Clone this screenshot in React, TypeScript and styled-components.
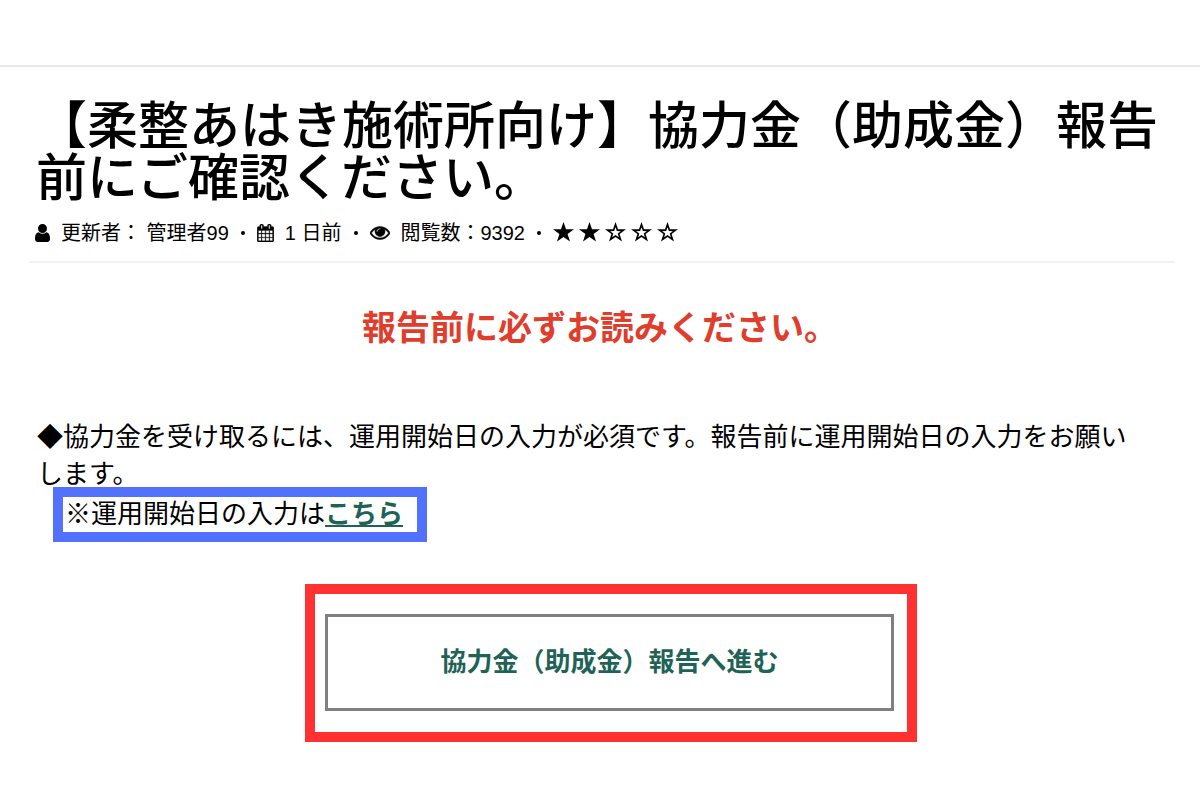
import React from "react";
import styled, { createGlobalStyle } from "styled-components";

const GlobalStyle = createGlobalStyle`
  * { box-sizing: border-box; }
  body {
    margin: 0;
    background: #fff;
    color: #000;
    font-family: "Liberation Sans", "Noto Sans CJK JP", sans-serif;
  }
`;

const TopBar = styled.header`
  height: 67px;
  border-bottom: 2px solid #e5eae8;
`;

const Article = styled.main`
  padding: 29px 25px 58px 29px;
`;

const Title = styled.h1`
  margin: 0;
  padding: 0 7px;
  font-size: 51px;
  line-height: 52px;
  font-weight: 500;
  font-family: "Noto Sans CJK JP", sans-serif;
`;

const Meta = styled.div`
  display: flex;
  flex-wrap: wrap;
  align-items: center;
  min-height: 63px;
  padding: 4px 6px 0;
  border-bottom: 2px solid #f2f2f2;
  font-size: 20px;
  line-height: 28px;
`;

const MetaItem = styled.span`
  display: flex;
  align-items: center;
  gap: 11px;
`;

const Dot = styled.span`
  width: 4px;
  height: 4px;
  margin: 0 12px;
  border-radius: 50%;
  background: #000;
`;

const Stars = styled.span`
  display: flex;
  gap: 5px;
`;

const Icon = styled.svg`
  display: block;
  fill: #000;
`;

const Notice = styled.h2`
  margin: 40px 0 0;
  padding-right: 4px;
  font-size: 34px;
  line-height: 50px;
  font-weight: 700;
  text-align: center;
  color: #e03e2d;
`;

const Body = styled.p`
  margin: 66px 0 0;
  padding: 0 32px 0 8px;
  font-size: 26px;
  line-height: 37px;
`;

const LinkBox = styled.p`
  width: fit-content;
  margin: -6px 0 0 24px;
  padding: 0 14px 0 2px;
  border: 10px solid #5271ff;
  font-size: 26px;
  line-height: 35px;
`;

const GuideLink = styled.a`
  color: #1f6357;
  font-weight: 700;
`;

const ActionArea = styled.div`
  display: flex;
  justify-content: center;
  padding: 42px 0 0 18px;
`;

const ActionFrame = styled.div`
  width: 612px;
  max-width: 100%;
  padding: 20px 13px 21px 10px;
  border: 10px solid #ff3131;
`;

const ActionButton = styled.button`
  display: block;
  width: 100%;
  min-height: 97px;
  padding: 0 0 6px;
  border: 3px solid #808080;
  background: #fff;
  color: #1f6357;
  font: inherit;
  font-size: 26px;
  font-weight: 700;
`;

const UserIcon = () => (
  <Icon width="15" height="18" viewBox="256 128 1280 1536" aria-hidden="true">
    <path d="M1536 1399q0 109-62.5 187t-150.5 78h-854q-88 0-150.5-78t-62.5-187q0-85 8.5-160.5t31.5-152 58.5-131 94-89 134.5-34.5q131 128 313 128t313-128q76 0 134.5 34.5t94 89 58.5 131 31.5 152 8.5 160.5zm-256-887q0 159-112.5 271.5t-271.5 112.5-271.5-112.5-112.5-271.5 112.5-271.5 271.5-112.5 271.5 112.5 112.5 271.5z" />
  </Icon>
);

const CalendarIcon = () => (
  <Icon width="17" height="18" viewBox="64 0 1664 1792" stroke="#000" strokeWidth="30" aria-hidden="true">
    <path d="M192 1664h288v-288h-288v288zm352 0h320v-288h-320v288zm-352-352h288v-320h-288v320zm352 0h320v-320h-320v320zm-352-384h288v-288h-288v288zm736 736h320v-288h-320v288zm-384-736h320v-288h-320v288zm768 736h288v-288h-288v288zm-384-352h320v-320h-320v320zm-352-864v-288q0-13-9.500-22.500t-22.500-9.500h-64q-13 0-22.500 9.500t-9.500 22.500v288q0 13 9.500 22.500t22.500 9.500h64q13 0 22.500-9.500t9.500-22.500zm736 864h288v-320h-288v320zm-384-384h320v-288h-320v288zm384 0h288v-288h-288v288zm32-480v-288q0-13-9.500-22.500t-22.500-9.500h-64q-13 0-22.500 9.500t-9.500 22.500v288q0 13 9.500 22.500t22.500 9.500h64q13 0 22.500-9.500t9.500-22.500zm384-64v1280q0 52-38 90t-90 38h-1408q-52 0-90-38t-38-90v-1280q0-52 38-90t90-38h128v-96q0-66 47-113t113-47h64q66 0 113 47t47 113v96h384v-96q0-66 47-113t113-47h64q66 0 113 47t47 113v96h128q52 0 90 38t38 90z" />
  </Icon>
);

const EyeIcon = () => (
  <Icon width="20" height="14" viewBox="0 352 1792 1216" stroke="#000" strokeWidth="50" aria-hidden="true">
    <path d="M1664 960q-152-236-381-353 61 104 61 225 0 185-131.5 316.5t-316.5 131.5-316.5-131.5-131.5-316.5q0-121 61-225-229 117-381 353 133 205 333.5 326.5t434.500 121.500 434.500-121.500 333.500-326.500zm-720-384q0-20-14-34t-34-14q-125 0-214.500 89.500t-89.500 214.500q0 20 14 34t34 14 34-14 14-34q0-86 61-147t147-61q20 0 34-14t14-34zm848 384q0 34-20 69-140 230-376.500 368.500t-499.500 138.500-499.500-139-376.500-368q-20-35-20-69t20-69q140-229 376.500-368t499.500-139 499.500 139 376.500 368q20 35 20 69z" />
  </Icon>
);

const STAR = "M10 0 12.4 6.900 20 7 13.900 11.400 16.200 18.500 10 14.200 3.800 18.500 6.100 11.400 0 7 7.600 6.900Z";
const STAR_HOLE = "M10 5 8.700 8.600 4.900 8.700 7.900 11 6.800 14.500 10 12.400 13.200 14.500 12.100 11 15.100 8.700 11.300 8.600Z";

const Star = ({ filled }: { filled: boolean }) => (
  <Icon width="21" height="21" viewBox="0 0 20 20" aria-hidden="true">
    <path fillRule="evenodd" d={filled ? STAR : STAR + STAR_HOLE} />
  </Icon>
);

export default function App() {
  return (
    <>
      <GlobalStyle />
      <TopBar />
      <Article>
        <Title>【柔整あはき施術所向け】協力金（助成金）報告前にご確認ください。</Title>
        <Meta>
          <MetaItem><UserIcon />更新者： 管理者99</MetaItem>
          <Dot />
          <MetaItem><CalendarIcon />1 日前</MetaItem>
          <Dot />
          <MetaItem><EyeIcon />閲覧数：9392</MetaItem>
          <Dot />
          <Stars>
            {[1, 2, 3, 4, 5].map((n) => <Star key={n} filled={n <= 2} />)}
          </Stars>
        </Meta>
        <Notice>報告前に必ずお読みください。</Notice>
        <Body>◆協力金を受け取るには、運用開始日の入力が必須です。報告前に運用開始日の入力をお願いします。</Body>
        <LinkBox>※運用開始日の入力は<GuideLink href="#start-date">こちら</GuideLink></LinkBox>
        <ActionArea>
          <ActionFrame>
            <ActionButton type="button">協力金（助成金）報告へ進む</ActionButton>
          </ActionFrame>
        </ActionArea>
      </Article>
    </>
  );
}
